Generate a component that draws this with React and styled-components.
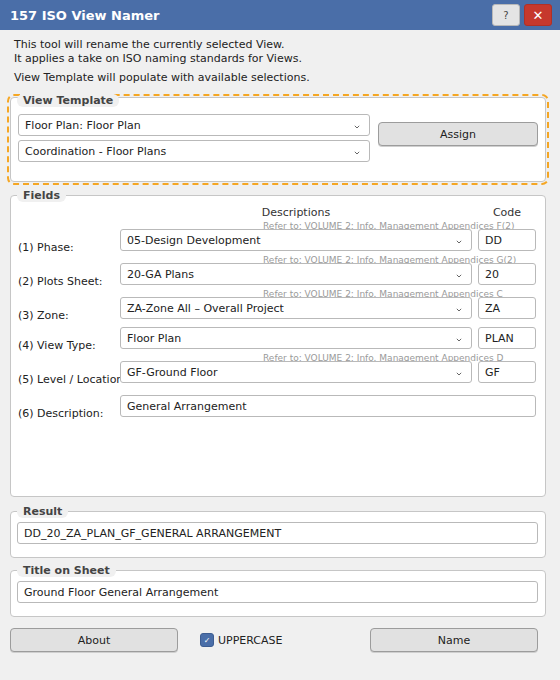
import React from 'react';
import styled, { createGlobalStyle } from 'styled-components';

const GlobalStyle = createGlobalStyle`
  html, body {
    margin: 0;
    padding: 0;
    background: #f0f0f0;
  }
  * {
    box-sizing: border-box;
  }
`;

const Window = styled.div`
  width: 560px;
  height: 680px;
  overflow: hidden;
  background: #f0f0f0;
  font-family: 'DejaVu Sans', 'Liberation Sans', sans-serif;
  font-size: 11px;
  color: #222;
`;

// title bar
const TitleBar = styled.div`
  height: 30px;
  display: flex;
  align-items: center;
  padding: 0 8px 0 10px;
  background: #4a6ea8;
`;

const Title = styled.div`
  flex: 1;
  color: #fff;
  font-weight: bold;
  font-size: 13px;
`;

const BarButton = styled.div`
  width: 28px;
  height: 22px;
  margin-left: 4px;
  display: flex;
  align-items: center;
  justify-content: center;
  border-radius: 3px;
  font-size: ${(p) => (p.$close ? '13px' : '10px')};
  color: ${(p) => (p.$close ? '#fff' : '#444')};
  background: ${(p) => (p.$close ? '#c6382d' : '#e4e4e4')};
  border: 1px solid ${(p) => (p.$close ? '#b03026' : '#b8b8b8')};
`;

// intro
const Intro = styled.div`
  padding: 8px 14px 0;
  line-height: 14px;
`;

const Para = styled.p`
  margin: 0 0 5px;
`;

// group boxes
const Group = styled.div`
  position: relative;
  margin: ${(p) => p.$top}px 14px 0 10px;
  height: ${(p) => (p.$height ? `${p.$height}px` : 'auto')};
  padding: ${(p) => p.$pad};
  background: #fff;
  border: 1px solid #c6c6c6;
  border-radius: 4px;
  outline: ${(p) => (p.$highlight ? '2px dashed #f5a623' : 'none')};
  outline-offset: 1px;
`;

const Legend = styled.div`
  position: absolute;
  top: ${(p) => p.$top}px;
  left: 6px;
  padding: 0 6px;
  line-height: 13px;
  font-weight: bold;
  color: #444;
  background: #f0f0f0;
  border-radius: 6px;
`;

const TemplateRow = styled.div`
  display: flex;
  align-items: flex-start;
`;

const ComboStack = styled.div`
  width: 352px;
  display: flex;
  flex-direction: column;
  gap: 4px;
`;

const Combo = styled.div`
  position: relative;
  height: 22px;
  display: flex;
  align-items: center;
  padding: 0 6px;
  background: #fff;
  border: 1px solid #b9b9b9;
  border-radius: 3px;
  white-space: nowrap;
  overflow: hidden;
`;

const ComboText = styled.span`
  flex: 1;
`;

const Chevron = styled.svg`
  width: 6px;
  height: 4px;
  margin: 3px 3px 0 0;
`;

const TextBox = styled.div`
  position: relative;
  width: ${(p) => (p.$width ? `${p.$width}px` : 'auto')};
  height: 22px;
  display: flex;
  align-items: center;
  padding: 0 6px;
  background: #fff;
  border: 1px solid #b9b9b9;
  border-radius: 3px;
  white-space: nowrap;
  overflow: hidden;
`;

const Button = styled.div`
  width: ${(p) => p.$width}px;
  height: 24px;
  margin-top: ${(p) => p.$top || 0}px;
  margin-left: ${(p) => p.$left || 0}px;
  display: flex;
  align-items: center;
  justify-content: center;
  background: #e1e1e1;
  border: 1px solid #9c9c9c;
  border-radius: 4px;
  box-shadow: 0 1px 0 #cfcfcf;
  color: #222;
`;

// fields
const HeaderRow = styled.div`
  display: flex;
  line-height: 14px;
  color: #333;
`;

const HeaderCell = styled.div`
  width: ${(p) => p.$width}px;
  margin-left: ${(p) => p.$left}px;
  text-align: center;
`;

const FieldRow = styled.div`
  display: flex;
  align-items: flex-start;
  margin-top: ${(p) => p.$gap}px;
`;

const Label = styled.div`
  width: 102px;
  padding-top: ${(p) => (p.$refer ? 22 : 13)}px;
  margin-bottom: -3px;
  line-height: 12px;
  white-space: nowrap;
  overflow: hidden;
`;

const DescColumn = styled.div`
  width: ${(p) => p.$width}px;
  display: flex;
  flex-direction: column;
`;

const Refer = styled.div`
  height: 9px;
  padding-left: 143px;
  font-size: 9px;
  line-height: 13px;
  color: #9a9a9a;
  white-space: nowrap;
`;

const CodeColumn = styled.div`
  margin-left: 6px;
  padding-top: ${(p) => (p.$refer ? 9 : 0)}px;
`;

// bottom
const Footer = styled.div`
  display: flex;
  align-items: center;
  margin-top: 11px;
  padding: 0 22px 0 10px;
`;

const Check = styled.div`
  width: 14px;
  height: 14px;
  margin: 0 4px 0 22px;
  display: flex;
  align-items: center;
  justify-content: center;
  background: #4a6ea8;
  border: 1px solid #3d5d91;
  border-radius: 3px;
  color: #fff;
  font-size: 8px;
`;

const CheckLabel = styled.span`
  flex: 1;
`;

const ComboBox = ({ children }) => (
  <Combo>
    <ComboText>{children}</ComboText>
    <Chevron viewBox="0 0 6 4">
      <path d="M0.8 0.8 L3 3 L5.2 0.8" fill="none" stroke="#666" strokeWidth="1" />
    </Chevron>
  </Combo>
);

const fields = [
  { label: '(1) Phase:', value: '05-Design Development', code: 'DD', refer: 'Refer to: VOLUME 2: Info. Management Appendices F(2)', gap: 0 },
  { label: '(2) Plots Sheet:', value: '20-GA Plans', code: '20', refer: 'Refer to: VOLUME 2: Info. Management Appendices G(2)', gap: 3 },
  { label: '(3) Zone:', value: 'ZA-Zone All \u2013 Overall Project', code: 'ZA', refer: 'Refer to: VOLUME 2: Info. Management Appendices C', gap: 3 },
  { label: '(4) View Type:', value: 'Floor Plan', code: 'PLAN', gap: 8 },
  { label: '(5) Level / Location:', value: 'GF-Ground Floor', code: 'GF', refer: 'Refer to: VOLUME 2: Info. Management Appendices D', gap: 3 }
];

const App = () => (
  <Window>
    <GlobalStyle />
    <TitleBar>
      <Title>157 ISO View Namer</Title>
      <BarButton>?</BarButton>
      <BarButton $close>✕</BarButton>
    </TitleBar>

    <Intro>
      <Para>
        This tool will rename the currently selected View.
        <br />
        It applies a take on ISO naming standards for Views.
      </Para>
      <Para>View Template will populate with available selections.</Para>
    </Intro>

    <Group $top={12} $pad="16px 7px 19px 7px" $highlight>
      <Legend $top={-4}>View Template</Legend>
      <TemplateRow>
        <ComboStack>
          <ComboBox>Floor Plan: Floor Plan</ComboBox>
          <ComboBox>Coordination - Floor Plans</ComboBox>
        </ComboStack>
        <Button $width={160} $top={8} $left={8}>
          Assign
        </Button>
      </TemplateRow>
    </Group>

    <Group $top={13} $height={302} $pad="10px 9px 0 7px">
      <Legend $top={-7}>Fields</Legend>
      <HeaderRow>
        <HeaderCell $width={352} $left={102}>Descriptions</HeaderCell>
        <HeaderCell $width={58} $left={6}>Code</HeaderCell>
      </HeaderRow>
      {fields.map((f) => (
        <FieldRow key={f.label} $gap={f.gap}>
          <Label $refer={!!f.refer}>{f.label}</Label>
          <DescColumn $width={352}>
            {f.refer && <Refer>{f.refer}</Refer>}
            <ComboBox>{f.value}</ComboBox>
          </DescColumn>
          <CodeColumn $refer={!!f.refer}>
            <TextBox $width={58}>{f.code}</TextBox>
          </CodeColumn>
        </FieldRow>
      ))}
      <FieldRow $gap={12}>
        <Label>(6) Description:</Label>
        <DescColumn $width={416}>
          <TextBox>General Arrangement</TextBox>
        </DescColumn>
      </FieldRow>
    </Group>

    <Group $top={14} $pad="10px 7px 13px 6px">
      <Legend $top={-7}>Result</Legend>
      <TextBox>DD_20_ZA_PLAN_GF_GENERAL ARRANGEMENT</TextBox>
    </Group>

    <Group $top={12} $pad="10px 7px 13px 6px">
      <Legend $top={-7}>Title on Sheet</Legend>
      <TextBox>Ground Floor General Arrangement</TextBox>
    </Group>

    <Footer>
      <Button $width={168}>About</Button>
      <Check>✓</Check>
      <CheckLabel>UPPERCASE</CheckLabel>
      <Button $width={168}>Name</Button>
    </Footer>
  </Window>
);

export default App;
